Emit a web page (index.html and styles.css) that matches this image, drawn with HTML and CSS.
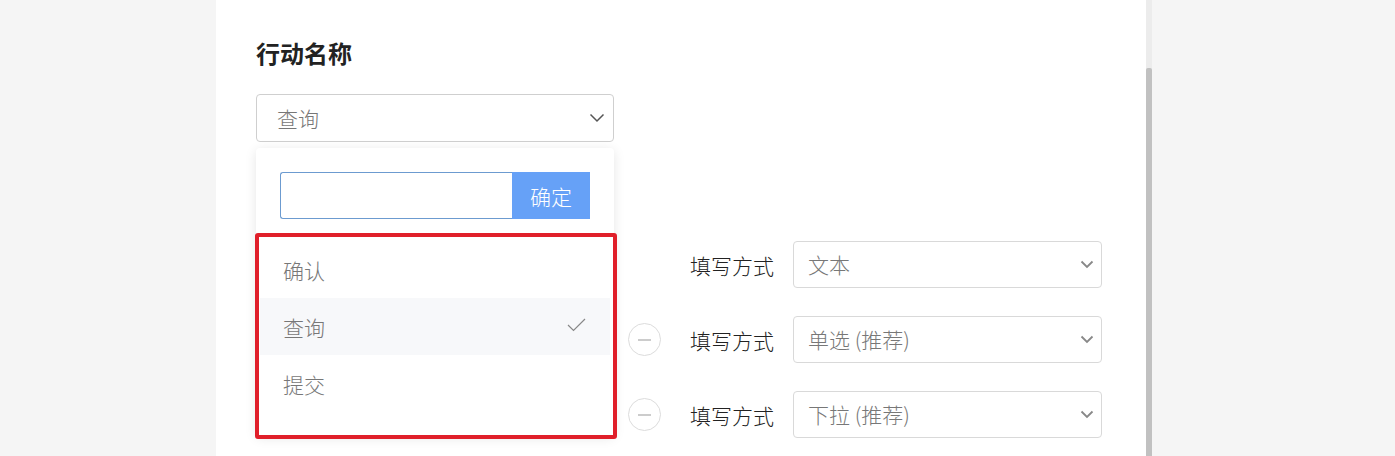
FILE: index.html
```html
<!DOCTYPE html>
<html lang="zh-CN">
<head>
<meta charset="utf-8">
<title>行动名称</title>
<link rel="stylesheet" href="styles.css">
</head>
<body>
<div class="page">
  <div class="gutter"></div>
  <main class="card">
    <h2 class="title">行动名称</h2>
    <div class="select select-main">
      <span class="select-value">查询</span>
      <svg class="chev chev-dark" width="16" height="10" viewBox="0 0 16 10"><path d="M1.5 1.5 L8 8 L14.5 1.5" fill="none" stroke="#555" stroke-width="1.5"/></svg>
    </div>

    <div class="rows">
      <div class="row">
        <span class="minus hidden"></span>
        <span class="label">填写方式</span>
        <div class="select select-row">
          <span class="select-value">文本</span>
          <svg class="chev" width="14" height="9" viewBox="0 0 14 9"><path d="M1.5 1.5 L7 7 L12.5 1.5" fill="none" stroke="#888" stroke-width="1.8"/></svg>
        </div>
      </div>
      <div class="row">
        <span class="minus"></span>
        <span class="label">填写方式</span>
        <div class="select select-row">
          <span class="select-value">单选 (推荐)</span>
          <svg class="chev" width="14" height="9" viewBox="0 0 14 9"><path d="M1.5 1.5 L7 7 L12.5 1.5" fill="none" stroke="#888" stroke-width="1.8"/></svg>
        </div>
      </div>
      <div class="row">
        <span class="minus"></span>
        <span class="label">填写方式</span>
        <div class="select select-row">
          <span class="select-value">下拉 (推荐)</span>
          <svg class="chev" width="14" height="9" viewBox="0 0 14 9"><path d="M1.5 1.5 L7 7 L12.5 1.5" fill="none" stroke="#888" stroke-width="1.8"/></svg>
        </div>
      </div>
    </div>

    <div class="dropdown">
      <div class="add-row">
        <div class="add-input"></div>
        <div class="add-btn">确定</div>
      </div>
      <ul class="options">
        <li class="option">确认</li>
        <li class="option active">查询
          <svg class="check" width="19" height="14" viewBox="0 0 19 14"><path d="M1 7 L6.5 12.5 L18 1" fill="none" stroke="#888" stroke-width="1.2"/></svg>
        </li>
        <li class="option">提交</li>
      </ul>
    </div>
    <div class="highlight-box"></div>
  </main>
  <div class="scrollbar"><div class="thumb"></div></div>
  <div class="rest"></div>
</div>
</body>
</html>
```

FILE: styles.css
```css
* { box-sizing: border-box; }
html, body { margin: 0; padding: 0; }
body {
  background: #f5f5f5;
  font-family: "Noto Sans CJK SC", "Microsoft YaHei", sans-serif;
  color: #333;
  overflow: hidden;
}
.page {
  display: flex;
  height: 456px;
}
.gutter { width: 216px; flex: none; }
.card {
  position: relative;
  width: 930px;
  flex: none;
  background: #fff;
  padding: 37px 0 0 40px;
}
.title {
  margin: 0;
  font-size: 24px;
  line-height: 32px;
  font-weight: 700;
  color: #222;
}
.select {
  display: flex;
  align-items: center;
  justify-content: space-between;
  background: #fff;
  border-radius: 4px;
}
.select-main {
  margin-top: 25px;
  width: 358px;
  height: 48px;
  border: 1px solid #cfcfcf;
  padding: 0 6px 0 20px;
}
.select-value {
  font-size: 21px;
  font-weight: 300;
  color: #777;
  line-height: 1;
}
.chev { margin-right: 2px; }
.rows {
  margin-top: 99px;
  width: 846px;
  display: flex;
  flex-direction: column;
  gap: 28px;
}
.row {
  display: flex;
  align-items: center;
  justify-content: flex-end;
  height: 47px;
}
.minus {
  position: relative;
  width: 33px;
  height: 33px;
  border: 1px solid #dcdcdc;
  border-radius: 50%;
  margin-right: 29px;
}
.minus::after {
  content: "";
  position: absolute;
  left: 9px;
  right: 9px;
  top: 15px;
  height: 2px;
  background: #cccccc;
}
.minus.hidden { visibility: hidden; }
.label {
  font-size: 21px;
  font-weight: 300;
  color: #222;
  width: 103px;
}
.select-row {
  width: 309px;
  height: 47px;
  border: 1px solid #d9d9d9;
  padding: 0 5px 0 14px;
}
.dropdown {
  position: absolute;
  left: 40px;
  top: 148px;
  width: 358px;
  height: 288px;
  background: #fff;
  border-radius: 4px;
  box-shadow: 0 2px 12px rgba(0, 0, 0, 0.1);
  padding: 24px 4px 0 4px;
}
.add-row {
  display: flex;
  margin-left: 20px;
  height: 47px;
}
.add-input {
  width: 232px;
  border: 1px solid #6c9bd0;
  border-right: none;
  border-radius: 3px 0 0 3px;
}
.add-btn {
  width: 78px;
  background: #66a1f7;
  color: #fff;
  font-size: 21px;
  font-weight: 300;
  display: flex;
  align-items: center;
  justify-content: center;
}
.options {
  list-style: none;
  margin: 22px 0 0 0;
  padding: 0;
}
.option {
  height: 57px;
  display: flex;
  align-items: center;
  justify-content: space-between;
  padding: 0 24px 0 23px;
  font-size: 21px;
  font-weight: 300;
  color: #777;
}
.option.active { background: #f7f8fa; }
.check { margin-top: -4px; }
.highlight-box {
  position: absolute;
  left: 39px;
  top: 233px;
  width: 362px;
  height: 206px;
  border: 4px solid #e01f2a;
  border-radius: 3px;
  pointer-events: none;
}
.scrollbar {
  width: 6px;
  flex: none;
  background: #ececec;
  position: relative;
}
.thumb {
  position: absolute;
  left: 0;
  right: 0;
  top: 68px;
  bottom: 0;
  background: #c1c1c1;
  border-radius: 2px 2px 0 0;
}
.rest { flex: 1; }
```
